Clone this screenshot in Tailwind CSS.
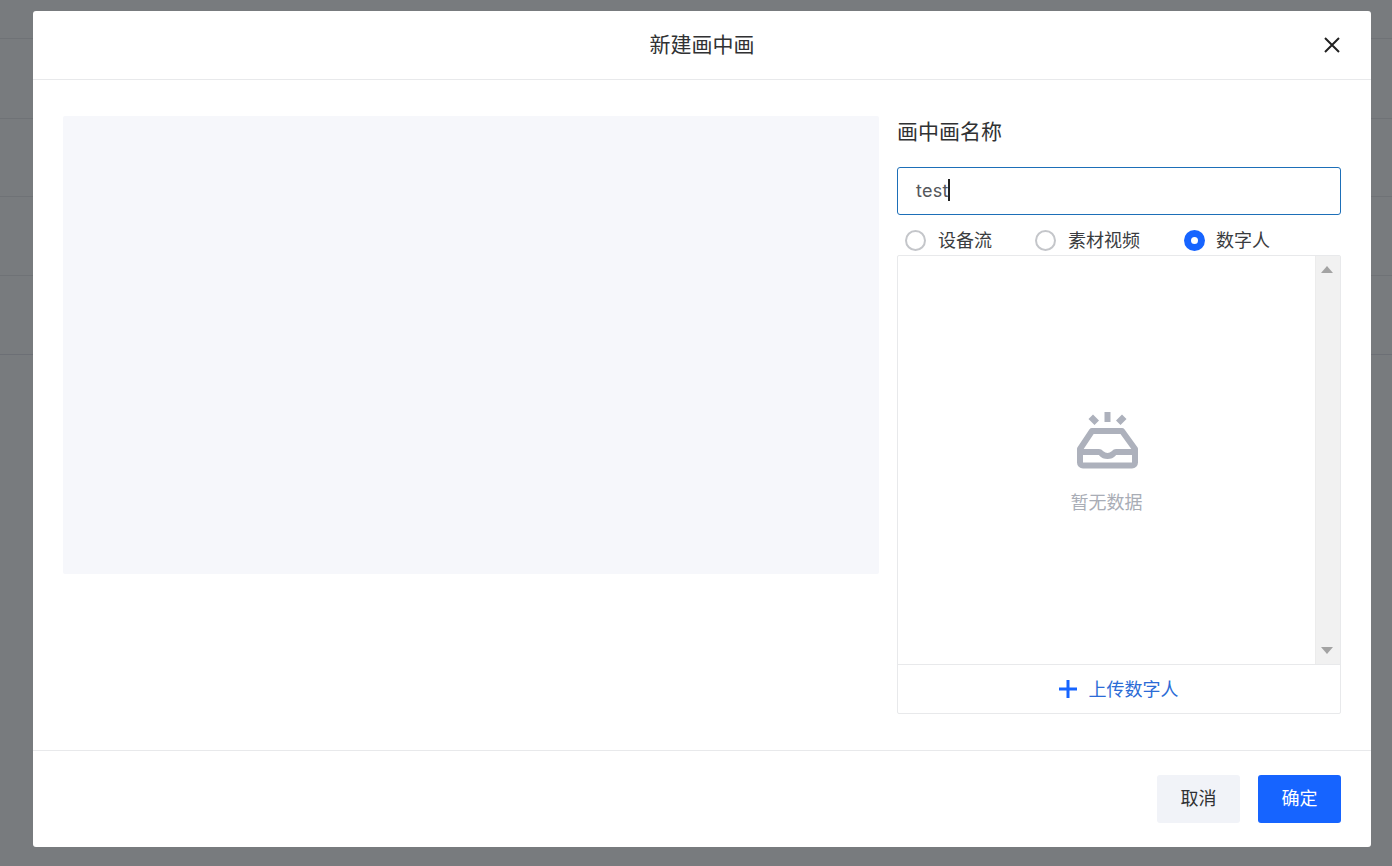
<!DOCTYPE html>
<html lang="zh">
<head>
  <meta charset="UTF-8">
  <meta name="viewport" content="width=device-width, initial-scale=1.0">
  <title>新建画中画</title>
  <script src="https://cdn.jsdelivr.net/npm/@tailwindcss/browser@4"></script>
</head>
<body class="relative h-[866px] w-[1392px] overflow-hidden bg-[#787b7e] font-['Inter','Noto_Sans_CJK_SC',sans-serif] text-[#303133]">
  <!-- table rows behind the mask -->
  <div class="flex flex-col pt-[38px]">
    <div class="h-[80px] border-t border-[#6f7276]"></div>
    <div class="h-[78px] border-t border-[#6f7276]"></div>
    <div class="h-[79px] border-t border-[#6f7276]"></div>
    <div class="h-[79px] border-t border-[#6f7276]"></div>
    <div class="border-t border-[#6c6f75]"></div>
  </div>

  <!-- modal -->
  <div class="absolute left-[33px] top-[11px] flex h-[836px] w-[1338px] flex-col rounded-[3px] bg-white">
    <div class="relative flex h-[69px] shrink-0 items-center justify-center border-b border-[#e8e9eb]">
      <span class="text-[21px] leading-[28px]">新建画中画</span>
      <svg class="absolute left-[1290px] top-[25px]" width="18" height="18" viewBox="0 0 18 18" fill="none" stroke="#222" stroke-width="2"><path d="M2 2l14 14M16 2L2 16"/></svg>
    </div>

    <div class="flex h-[670px] shrink-0 gap-[18px] pl-[30px] pr-[30px] pt-[36px]">
      <div class="h-[458px] w-[816px] shrink-0 rounded-[2px] bg-[#f6f7fb]"></div>
      <div class="flex w-[444px] flex-col">
        <div class="h-[32px] text-[21px] leading-[32px] text-[#303133]">画中画名称</div>
        <div class="mt-[19px] flex h-[48px] items-center rounded-[3px] border border-[#1d6fb8] pb-[2px] pl-[18px] text-[18px] tracking-[0.3px] text-[#55575b]">test<span class="ml-[-1px] h-[22px] w-[2px] bg-[#222]"></span></div>
        <div class="flex h-[40px] items-center pl-[8px] pt-[11px] text-[18px] text-[#3a3c40]">
          <span class="h-[21px] w-[21px] shrink-0 rounded-full border-2 border-[#c4c6ca]"></span>
          <span class="ml-[12px] w-[76px] shrink-0">设备流</span>
          <span class="ml-[21px] h-[21px] w-[21px] shrink-0 rounded-full border-2 border-[#c4c6ca]"></span>
          <span class="ml-[12px] w-[95px] shrink-0">素材视频</span>
          <span class="ml-[21px] flex h-[21px] w-[21px] shrink-0 items-center justify-center rounded-full bg-[#1664ff]"><span class="h-[7px] w-[7px] rounded-full bg-white"></span></span>
          <span class="ml-[11px]">数字人</span>
        </div>
        <div class="flex h-[459px] flex-col rounded-[2px] border border-[#e8e9eb]">
          <div class="flex h-[408px] shrink-0">
            <div class="flex flex-1 flex-col items-center pt-[155px]">
              <svg width="62" height="58" viewBox="0 0 62 58" fill="none">
                <path d="M28.500 1h6v10h-6zM12.500 8l4.500-4.500 6 6-4.500 4.500zM50.500 8l-4.500-4.500-6 6 4.500 4.500z" fill="#adb1bc"/>
                <path d="M16 20h30l13 18v13.500a3 3 0 0 1-3 3H7a3 3 0 0 1-3-3V38zM4 41h19c1 0 1.500.5 2.500 1.500 1.500 1.700 3.500 2.500 6 2.500s4.500-.8 6-2.500c1-1 1.500-1.500 2.500-1.500h19" stroke="#adb1bc" stroke-width="6" stroke-linejoin="round"/>
              </svg>
              <div class="mt-[21px] text-[18px] leading-[26px] text-[#a9adb6]">暂无数据</div>
            </div>
            <div class="flex w-[25px] flex-col items-center justify-between border-l border-[#ececec] bg-[#f1f1f1] py-[10px] pr-[2px]">
              <span class="h-0 w-0 border-x-[6px] border-b-[7px] border-x-transparent border-b-[#a3a3a3]"></span>
              <span class="h-0 w-0 border-x-[6px] border-t-[7px] border-x-transparent border-t-[#a3a3a3]"></span>
            </div>
          </div>
          <div class="flex flex-1 items-center justify-center gap-[11px] border-t border-[#e8e9eb] pr-[2px] text-[18px] text-[#2b6bd6]">
            <svg width="20" height="20" viewBox="0 0 20 20" fill="none" stroke="#1664ff" stroke-width="3"><path d="M10 1v18M1 10h18"/></svg>
            <span>上传数字人</span>
          </div>
        </div>
      </div>
    </div>

    <div class="flex flex-1 items-start justify-end gap-[18px] border-t border-[#e8e9eb] pr-[30px] pt-[24px]">
      <button class="h-[48px] w-[83px] rounded-[3px] bg-[#f1f3f8] pb-[2px] text-[18px] text-[#303133]">取消</button>
      <button class="h-[48px] w-[83px] rounded-[3px] bg-[#1664ff] pb-[2px] text-[18px] text-white">确定</button>
    </div>
  </div>
</body>
</html>
